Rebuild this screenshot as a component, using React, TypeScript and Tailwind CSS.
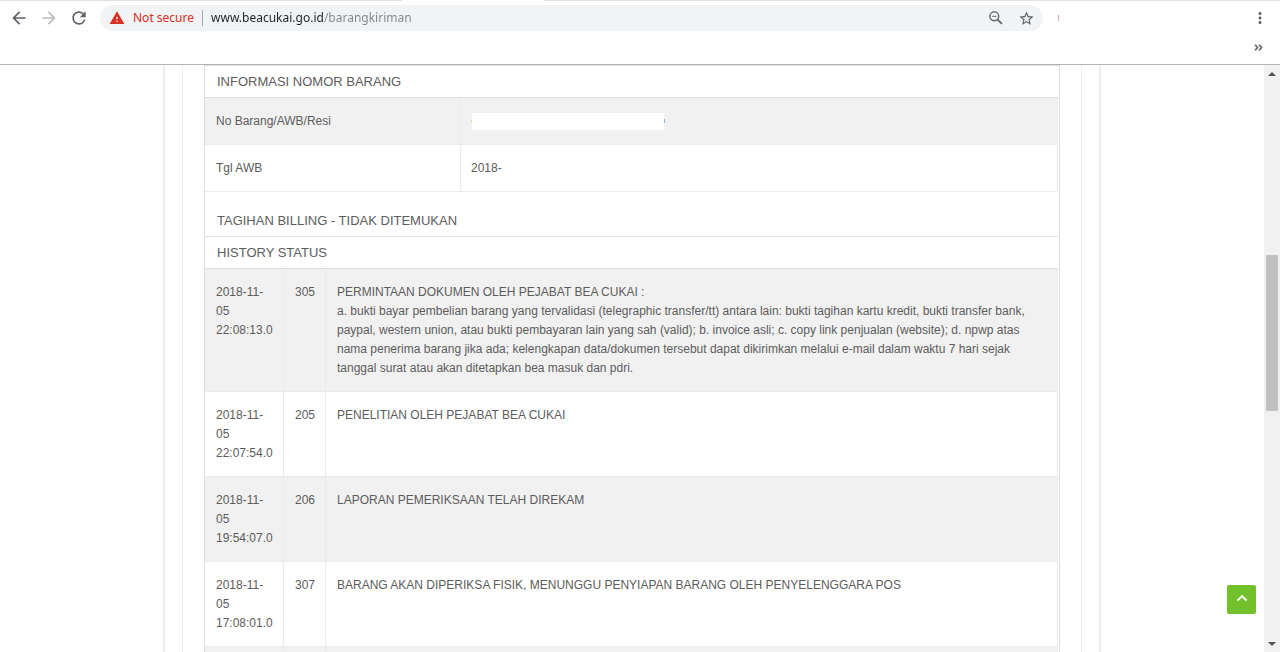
import {
  MdArrowBack,
  MdArrowForward,
  MdMoreVert,
  MdRefresh,
  MdStarBorder,
  MdWarning,
} from "react-icons/md";

type HistoryEntry = {
  date: string;
  time: string;
  code: string;
  title: string;
  detail?: string;
};

const history: HistoryEntry[] = [
  {
    date: "2018-11-05",
    time: "22:08:13.0",
    code: "305",
    title: "PERMINTAAN DOKUMEN OLEH PEJABAT BEA CUKAI :",
    detail:
      "a. bukti bayar pembelian barang yang tervalidasi (telegraphic transfer/tt) antara lain: bukti tagihan kartu kredit, bukti transfer bank, paypal, western union, atau bukti pembayaran lain yang sah (valid); b. invoice asli; c. copy link penjualan (website); d. npwp atas nama penerima barang jika ada; kelengkapan data/dokumen tersebut dapat dikirimkan melalui e-mail dalam waktu 7 hari sejak tanggal surat atau akan ditetapkan bea masuk dan pdri.",
  },
  { date: "2018-11-05", time: "22:07:54.0", code: "205", title: "PENELITIAN OLEH PEJABAT BEA CUKAI" },
  { date: "2018-11-05", time: "19:54:07.0", code: "206", title: "LAPORAN PEMERIKSAAN TELAH DIREKAM" },
  {
    date: "2018-11-05",
    time: "17:08:01.0",
    code: "307",
    title: "BARANG AKAN DIPERIKSA FISIK, MENUNGGU PENYIAPAN BARANG OLEH PENYELENGGARA POS",
  },
];

function BrowserBar() {
  return (
    <header className="shrink-0 border-b border-[#b4b4b4] bg-white font-['Noto_Sans','Open_Sans',sans-serif] text-[#5f6368]">
      <div className="flex h-px">
        <div className="w-[402px] bg-[#dee1e6]" />
        <div className="w-[142px] bg-white" />
        <div className="flex-1 bg-[#dee1e6]" />
      </div>
      <div className="flex h-[34px] items-center pl-1 pr-[5px]">
        <button aria-label="Back" className="flex w-[30px] justify-center">
          <MdArrowBack size={20} />
        </button>
        <button aria-label="Forward" className="flex w-[30px] justify-center text-[#babcbe]">
          <MdArrowForward size={20} />
        </button>
        <button aria-label="Reload" className="flex w-[30px] justify-center">
          <MdRefresh size={20} />
        </button>
        <div className="ml-1.5 flex h-[26px] flex-1 items-center rounded-full bg-[#f1f3f4] pl-[9px] pr-[2px] text-xs">
          <button className="flex items-center gap-2 text-[#d93025]">
            <MdWarning size={16} />
            Not secure
          </button>
          <div className="mx-2 h-4 w-px bg-[#a5a8ab]" />
          <input
            aria-label="Address"
            defaultValue="www.beacukai.go.id/barangkiriman"
            className="min-w-0 flex-1 bg-[linear-gradient(90deg,#202124_113px,#80868b_113px)] bg-clip-text text-[#202124] outline-none [-webkit-text-fill-color:transparent]"
          />
          <button aria-label="Zoom" className="flex w-[30px] justify-center">
            <svg width="14" height="14" viewBox="0 0 14 14" fill="none" stroke="currentColor">
              <circle cx="5.3" cy="5.3" r="4.4" strokeWidth="1.4" />
              <path d="M3.2 5.3h4.2" strokeWidth="1" />
              <path d="m8.600 8.600 4.300 4.300" strokeWidth="1.700" />
            </svg>
          </button>
          <button aria-label="Bookmark this page" className="flex w-[30px] justify-center">
            <MdStarBorder size={17} />
          </button>
        </div>
        <div className="ml-[15px] h-[6px] w-px bg-[#f0a0a4]" />
        <button aria-label="Menu" className="ml-[186px] flex w-[30px] justify-center">
          <MdMoreVert size={18} />
        </button>
      </div>
      <div className="flex h-[29px] items-start justify-end pr-[17px] pt-[9px]">
        <button aria-label="More bookmarks" className="flex">
          <svg width="9" height="7" viewBox="0 0 9 7" fill="none" stroke="currentColor" strokeWidth="1.6">
            <path d="M1 .7 3.6 3.5 1 6.3M5 .7l2.6 2.8L5 6.3" />
          </svg>
        </button>
      </div>
    </header>
  );
}

function Heading({ children }: { children: string }) {
  return (
    <h2 className="h-8 border-b border-[#dfe0e1] pl-3 text-[13px] leading-[31px]">{children}</h2>
  );
}

function ItemTable() {
  return (
    <table className="w-full table-fixed border-separate border-spacing-0 border-r border-[#e9ebed]">
      <tbody>
        <tr className="h-[47px] bg-[#f1f1f1]">
          <th scope="row" className="w-[256px] border-b border-r border-[#e9ebed] px-[11px] text-left font-normal">
            No Barang/AWB/Resi
          </th>
          <td className="border-b border-[#e9ebed] px-[10px]">
            <div className="flex items-center">
              <div className="h-[2px] w-px bg-[#f3d9a8]" />
              <div className="h-[17px] w-[192px] bg-white" />
              <div className="h-1 w-px bg-[#7cc0e8]" />
            </div>
          </td>
        </tr>
        <tr className="h-[47px]">
          <th scope="row" className="border-b border-r border-[#e9ebed] px-[11px] text-left font-normal">
            Tgl AWB
          </th>
          <td className="border-b border-[#e9ebed] px-[10px]">2018-</td>
        </tr>
      </tbody>
    </table>
  );
}

function HistoryTable() {
  const cell = "border-b border-r border-[#e9ebed] px-[11px] pb-[13px] pt-[14px]";
  return (
    <table className="w-full table-fixed border-separate border-spacing-0">
      <colgroup>
        <col className="w-[79px]" />
        <col className="w-[42px]" />
        <col />
      </colgroup>
      <tbody className="align-top">
        {history.map((entry) => (
          <tr key={entry.time} className="odd:bg-[#f1f1f1]">
            <td className={cell}>
              {entry.date} {entry.time}
            </td>
            <td className={cell}>{entry.code}</td>
            <td className={cell}>
              {entry.title}
              {entry.detail && <p>{entry.detail}</p>}
            </td>
          </tr>
        ))}
        <tr className="h-[85px] bg-[#f1f1f1]">
          <td className={cell} />
          <td className={cell} />
          <td className={cell} />
        </tr>
      </tbody>
    </table>
  );
}

function Scrollbar() {
  return (
    <div className="flex w-4 shrink-0 flex-col items-center bg-[#f1f1f1] text-[#505050]">
      <button aria-label="Scroll up" className="flex h-[17px] w-4 items-center justify-center">
        <svg width="8" height="4" viewBox="0 0 8 4" fill="currentColor">
          <path d="M4 0 8 4H0z" />
        </svg>
      </button>
      <div className="grow-[173]" />
      <div className="w-3 grow-[157] bg-[#c1c1c1]" />
      <div className="grow-[224]" />
      <button aria-label="Scroll down" className="flex h-[17px] w-4 items-center justify-center">
        <svg width="8" height="4" viewBox="0 0 8 4" fill="currentColor">
          <path d="M0 0h8L4 4z" />
        </svg>
      </button>
    </div>
  );
}

export default function App() {
  return (
    <div className="flex h-screen flex-col bg-white">
      <BrowserBar />
      <div className="flex min-h-0 flex-1">
        <main className="relative min-w-0 flex-1 overflow-hidden font-['Liberation_Sans',Arial,sans-serif] text-xs leading-[19px] text-[#5c5c5c]">
          <div className="mx-auto max-w-[938px] border-x-2 border-[#ededed] px-[17px]">
            <div className="border-x border-[#ededed] px-[21px]">
              <div className="border border-[#dcdddd] pr-px">
                <Heading>INFORMASI NOMOR BARANG</Heading>
                <ItemTable />
                <div className="pt-[13px]">
                  <Heading>TAGIHAN BILLING - TIDAK DITEMUKAN</Heading>
                </div>
                <Heading>HISTORY STATUS</Heading>
                <HistoryTable />
              </div>
            </div>
          </div>
          <button
            aria-label="Back to top"
            className="absolute bottom-[38px] right-2 flex h-[29px] w-[29px] items-center justify-center rounded-[2px] bg-[#72c02c] pb-[3px] text-white"
          >
            <svg width="12" height="8" viewBox="0 0 12 8" fill="none" stroke="currentColor" strokeWidth="1.8">
              <path d="m1.5 6.5 4.5-4.5 4.5 4.5" />
            </svg>
          </button>
        </main>
        <Scrollbar />
      </div>
    </div>
  );
}
